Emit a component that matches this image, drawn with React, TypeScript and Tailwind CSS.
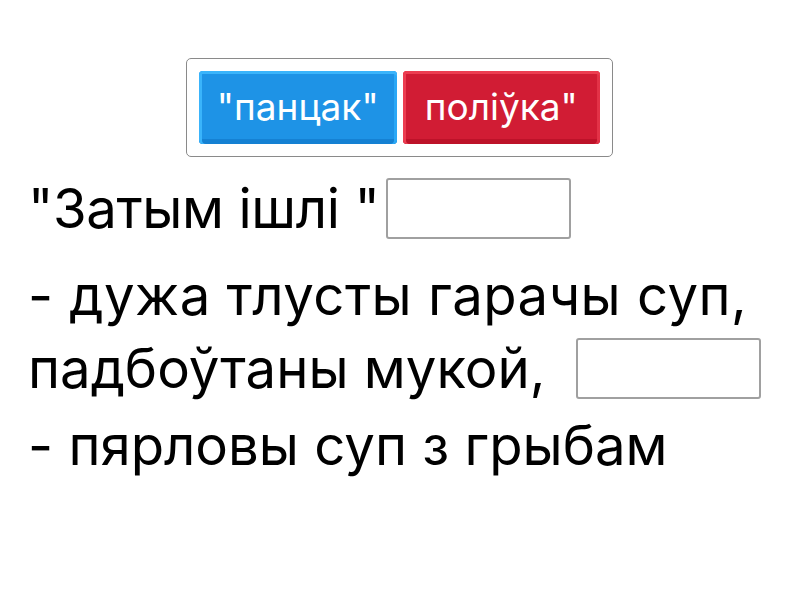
import React from "react";

const font = { fontFamily: "Inter, Roboto, 'Noto Sans', sans-serif" };

function Blank() {
  return (
    <span className="inline-block w-[185px] h-[61px] border-2 border-[#a0a0a0] rounded-[3px] bg-white shrink-0" />
  );
}

export default function App() {
  return (
    <div className="w-[800px] h-[600px] bg-white relative overflow-hidden text-black" style={font}>
      <div className="flex justify-center pt-[58px]">
        <div className="ml-[-1px] w-[427px] h-[99px] border border-[#8a8a8a] rounded-[5px] flex items-center gap-[6px] px-[12px]">
          <div className="w-[198px] h-[73px] rounded-[4px] bg-[#1e93e6] shadow-[inset_0_3px_0_#3ab4fb,inset_3px_0_0_#3ab4fb,inset_-3px_0_0_#2aa8f6,inset_0_-5px_0_#1581d3] flex items-center justify-center text-white text-[37px] leading-none pb-[3px]">
            "панцак"
          </div>
          <div className="w-[198px] h-[73px] rounded-[4px] bg-[#d11c34] shadow-[inset_0_3px_0_#ec3d51,inset_3px_0_0_#ec3d51,inset_-3px_0_0_#e33247,inset_0_-5px_0_#bd1229] flex items-center justify-center text-white text-[37px] leading-none pb-[3px]">
            поліўка"
          </div>
        </div>
      </div>
      <div className="pl-[28px] text-[54.5px] leading-[60px]">
        <div className="mt-[20px] flex items-center h-[62px]">
          <span className="w-[358px] whitespace-pre tracking-[-0.4px]">"Затым ішлі "</span>
          <Blank />
        </div>
        <div className="mt-[26px] whitespace-pre tracking-[0.45px]">- дужа тлусты гарачы суп,</div>
        <div className="mt-[12px] flex items-center h-[62px]">
          <span className="w-[548px] whitespace-pre">падбоўтаны мукой,</span>
          <Blank />
        </div>
        <div className="mt-[16px] whitespace-pre">- пярловы суп з грыбам</div>
      </div>
    </div>
  );
}
